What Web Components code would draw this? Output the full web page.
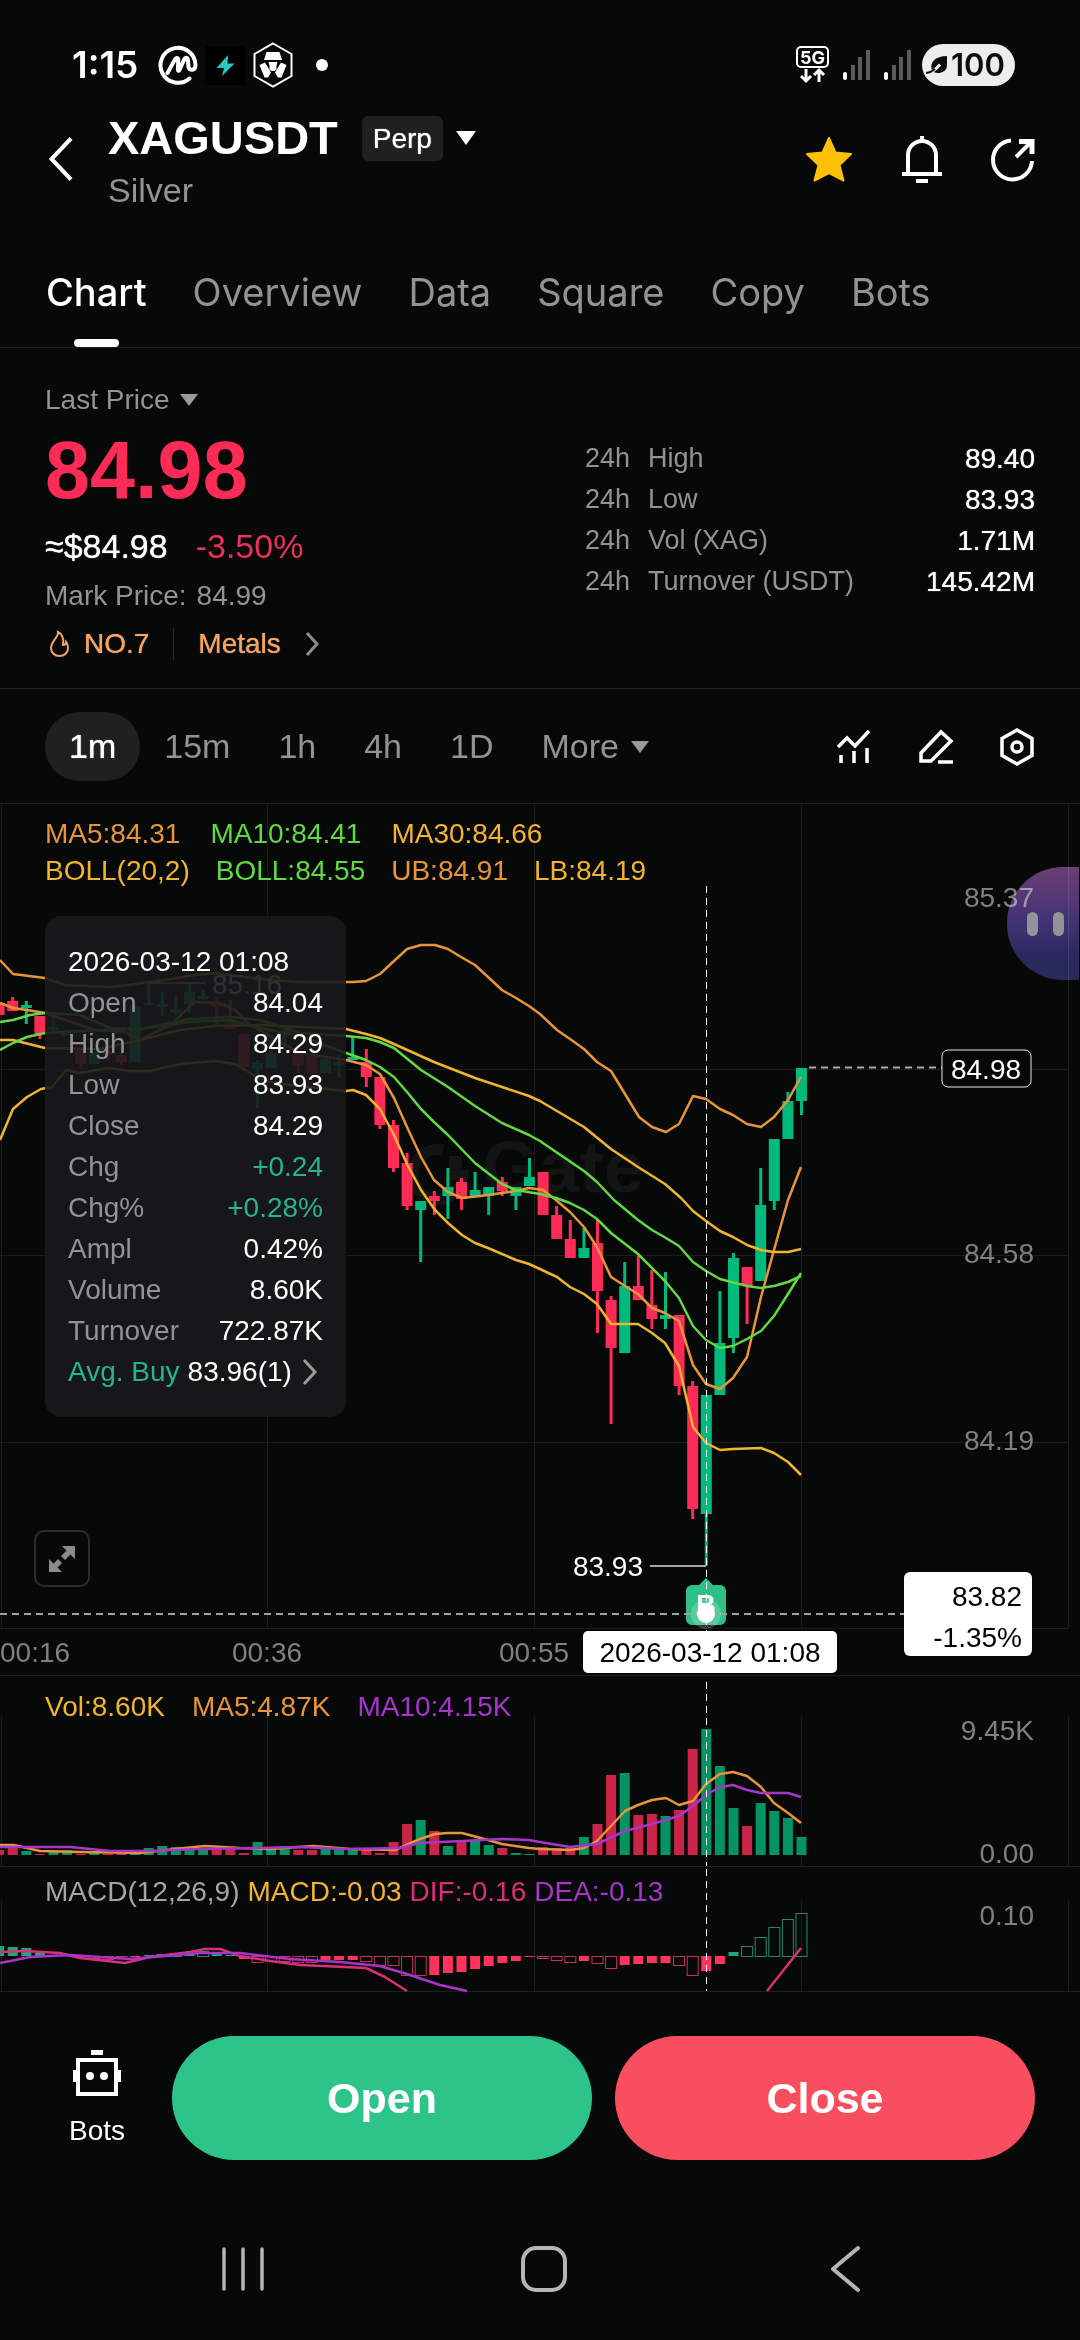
<!DOCTYPE html>
<html lang="en">
<head>
<meta charset="utf-8">
<meta name="viewport" content="width=device-width, initial-scale=1">
<title>XAGUSDT Perp</title>
<style>
  :root {
    --bg: #070909;
    --line: #1e2020;
    --muted: #929394;
    --up: #00b97c;
    --down: #ff2b57;
    --orange: #e8953a;
    --yellow: #f2b32f;
    --green: #62d844;
    --purple: #a834cc;
    --pink: #d92e78;
    --gutter: 45px;
  }
  body {
    margin: 0;
    background: var(--bg);
    color: #fff;
    font-family: "Liberation Sans", Arial, sans-serif;
    font-size: 28px;
    line-height: 32px;
  }
</style>
</head>
<body>
<app-screen></app-screen>

<script>
const reset = `
  * { box-sizing: border-box; }
  :host { display: block; }
  button, a { font: inherit; color: inherit; background: none; border: 0; padding: 0; margin: 0; text-decoration: none; cursor: pointer; }
  svg { display: block; flex: none; }
`;

function define(name, css, html) {
  const template = document.createElement('template');
  template.innerHTML = `<style>${reset}${css}</style>${html}`;
  customElements.define(name, class extends HTMLElement {
    constructor() {
      super();
      this.attachShadow({ mode: 'open' }).appendChild(template.content.cloneNode(true));
    }
  });
}

/* ---------- status bar ---------- */
define('status-bar', `
  :host { display: flex; justify-content: space-between; align-items: center; height: 110px; padding: 20px 65px 0 72px; font-family: Inter, sans-serif; }
  .side { display: flex; align-items: center; }
  .time { font-size: 37px; line-height: 44px; font-weight: 600; margin-right: 20px; }
  .left svg + svg { margin-left: 8px; }
  .signal { margin-left: 14px; }
  .battery { display: flex; align-items: center; gap: 3px; height: 42px; padding: 0 10px 0 4px; margin-left: 11px; border-radius: 21px; background: #eceeed; color: #0b0d0d; font-size: 31px; font-weight: 600; }
`, `
  <div class="side left">
    <span class="time">1:15</span>
    <svg width="40" height="40" viewBox="0 0 40 40" fill="none" stroke="#fff" stroke-width="4" stroke-linecap="round" stroke-linejoin="round">
      <path d="M31.500 33.500A17.500 17.500 0 1 1 37.500 20c0 5.500-6 6.500-7 2l-.6-7c-.3-3-2.600-3-3.600-.8L21.500 25c-.5 1.200-1.600 1-1.600-.4l.4-9.600c0-2.500-2.300-2.700-3.300-.6L9.500 28"/>
    </svg>
    <svg width="39" height="39" viewBox="0 0 39 39">
      <rect width="39" height="39" fill="#000"/>
      <path d="M22 9 10.500 22H18l-2 8L28.500 17.500H21.500L22 9z" fill="#26c9c3"/>
    </svg>
    <svg width="40" height="46" viewBox="0 0 40 46">
      <path d="M20 1.500 38.500 12v22L20 44.500 1.500 34V12z" fill="none" stroke="#fff" stroke-width="2"/>
      <path d="M13.500 10h13l2.500 8H11z" fill="#fff"/>
      <path d="M6.500 23 12 20.500l6 10-3 5h-3.500zM33.500 23 28 20.500l-6 10 3 5h3.500z" fill="#fff"/>
      <path d="M15.500 20h9l-1 3.500v4l-2 1.500h-3l-2-1.500v-4z" fill="#fff"/>
    </svg>
    <svg width="36" height="14" viewBox="0 0 36 14"><circle cx="21" cy="7" r="6" fill="#fff"/></svg>
  </div>
  <div class="side">
    <svg width="33" height="38" viewBox="0 0 33 38">
      <rect x="1" y="1" width="31" height="20" rx="4" fill="none" stroke="#fff" stroke-width="2"/>
      <text x="16.500" y="18" text-anchor="middle" font-family="Inter, sans-serif" font-weight="700" font-size="18" fill="#fff">5G</text>
      <path d="M10 23v12M5 30l5 5 5-5M23 36V24M18 29l5-5 5 5" fill="none" stroke="#fff" stroke-width="3"/>
    </svg>
    <svg class="signal" width="27" height="30" viewBox="0 0 27 30"><rect y="22" width="4" height="8" rx="2" fill="#fff"/><path d="M8 15h4v15H8zM15 7h4v23h-4zM23 0h4v30h-4z" fill="#5a5b5b"/></svg>
    <svg class="signal" width="27" height="30" viewBox="0 0 27 30"><rect y="22" width="4" height="8" rx="2" fill="#fff"/><path d="M8 15h4v15H8zM15 7h4v23h-4zM23 0h4v30h-4z" fill="#5a5b5b"/></svg>
    <div class="battery">
      <svg width="22" height="20" viewBox="0 0 22 20"><path d="M21 1v9c0 6-5 8-9 8-3 0-5-1-6-3-3-7 3-14 15-14z" fill="#0b0d0d"/><path d="M0 18.500c5-.5 9-3 14-9" stroke="#eceeed" stroke-width="3" fill="none"/><path d="M0 18c3-.2 6-1.500 9-4" stroke="#0b0d0d" stroke-width="2" fill="none"/></svg>
      <span>100</span>
    </div>
  </div>
`);

/* ---------- pair header ---------- */
define('pair-header', `
  :host { display: flex; align-items: center; padding: 0 var(--gutter) 22px; }
  .back { padding: 0 35px 0 4px; }
  .name { flex: 1; display: flex; flex-direction: column; gap: 6px; }
  .row { display: flex; align-items: center; }
  h1 { margin: 0; font-size: 47px; line-height: 56px; font-weight: 700; }
  .kind { display: flex; align-items: center; gap: 13px; margin-left: 24px; }
  .kind span { padding: 0 11px; line-height: 45px; border-radius: 6px; background: #1f2121; text-shadow: 0 0 1px; }
  .sub { font-size: 34px; line-height: 36px; color: var(--muted); }
  .actions { display: flex; align-items: center; gap: 48px; }
`, `
  <button class="back" aria-label="Back"><svg width="24" height="44" viewBox="0 0 24 44" fill="none" stroke="#fff" stroke-width="4"><path d="M22 1.500 2.500 22 22 42.500"/></svg></button>
  <div class="name">
    <div class="row">
      <h1>XAGUSDT</h1>
      <button class="kind"><span>Perp</span><svg width="20" height="14" viewBox="0 0 20 14"><path d="M0 0h20L10 14z" fill="#fff"/></svg></button>
    </div>
    <div class="sub">Silver</div>
  </div>
  <div class="actions">
    <button aria-label="Favourite"><svg width="48" height="46" viewBox="0 0 48 46"><path d="M24 2l6.500 14.500L46 18 34.500 29l4 15.500L24 37 9.500 44.500l4-15.500L2 18l15.500-1.500z" fill="#ffc107" stroke="#ffc107" stroke-width="2" stroke-linejoin="round"/></svg></button>
    <button aria-label="Alerts"><svg width="42" height="48" viewBox="0 0 42 48" fill="none" stroke="#fff" stroke-width="4"><path d="M21 1v5M1 39h40M7 39V20a14 14 0 0 1 28 0v19M15 46h12"/></svg></button>
    <button aria-label="Share"><svg width="44" height="46" viewBox="0 0 44 46" fill="none" stroke="#fff" stroke-width="4"><path d="M20 4.500A19.500 19.500 0 1 0 41 25M25 21 39 7"/><path d="M28 5.500h13V18" stroke-width="5"/></svg></button>
  </div>
`);

/* ---------- tabs ---------- */
define('tab-bar', `
  :host { border-bottom: 1px solid var(--line); }
  nav { display: flex; gap: 46px; padding: 42px 46px 0; }
  a { display: flex; flex-direction: column; align-items: center; gap: 27px; font-family: Inter, sans-serif; font-size: 38px; line-height: 40px; color: var(--muted); }
  a::after { content: ""; width: 45px; height: 8px; border-radius: 4px; }
  a[aria-current] { color: #fff; font-weight: 500; }
  a[aria-current]::after { background: #fff; }
`, `
  <nav>
    <a href="#chart" aria-current="page">Chart</a>
    <a href="#overview">Overview</a>
    <a href="#data">Data</a>
    <a href="#square">Square</a>
    <a href="#copy">Copy</a>
    <a href="#bots">Bots</a>
  </nav>
`);

/* ---------- price summary ---------- */
define('price-summary', `
  :host { display: flex; justify-content: space-between; padding: 36px var(--gutter) 28px; border-bottom: 1px solid var(--line); color: var(--muted); }
  .left { display: flex; flex-direction: column; align-items: flex-start; gap: 12px; }
  .kind { display: flex; align-items: center; gap: 10px; }
  .last { font-size: 81px; line-height: 84px; font-weight: 700; color: var(--down); }
  .fiat { display: flex; gap: 28px; font-size: 34px; line-height: 44px; color: #fff; }
  .fiat b { font-weight: 400; color: #ea3159; }
  .fiat span, dd, .tags { text-shadow: 0 0 1px; }
  .mark { display: flex; gap: 10px; }
  .tags { display: flex; align-items: center; margin-top: 4px; color: #f5a463; }
  .rank { display: flex; align-items: center; gap: 14px; padding: 0 24px 0 4px; border-right: 1px solid #2a2c2c; }
  .sector { display: flex; align-items: center; gap: 24px; padding-left: 24px; }
  dl { flex: none; width: 450px; margin: 54px 0 0; }
  dl div { display: flex; line-height: 41px; }
  dt { display: flex; flex: 1; gap: 18px; font-size: 27px; }
  dd { margin: 0; color: #fff; }
`, `
  <div class="left">
    <button class="kind">Last Price<svg width="18" height="12" viewBox="0 0 18 12"><path d="M0 0h18L9 12z" fill="#9a9b9b"/></svg></button>
    <div class="last">84.98</div>
    <div class="fiat"><span>≈$84.98</span><b>-3.50%</b></div>
    <div class="mark"><span>Mark Price:</span><span>84.99</span></div>
    <div class="tags">
      <span class="rank"><svg width="21" height="28" viewBox="0 0 21 28" fill="none" stroke="#f5a463" stroke-width="2"><path d="M9 2c1 5-7 9-7 16 0 5 4 8 8.500 8s8.500-3 8.500-8c0-3-1-5-2-6 0 2-1 3-3 3C15 9 13 4 9 2z"/></svg>NO.7</span>
      <a class="sector" href="#metals">Metals<svg width="14" height="24" viewBox="0 0 14 24" fill="none" stroke="#8b8c8c" stroke-width="3"><path d="M2 1l10 11L2 23"/></svg></a>
    </div>
  </div>
  <dl>
    <div><dt><span>24h</span><span>High</span></dt><dd>89.40</dd></div>
    <div><dt><span>24h</span><span>Low</span></dt><dd>83.93</dd></div>
    <div><dt><span>24h</span><span>Vol (XAG)</span></dt><dd>1.71M</dd></div>
    <div><dt><span>24h</span><span>Turnover (USDT)</span></dt><dd>145.42M</dd></div>
  </dl>
`);

/* ---------- interval bar ---------- */
define('interval-bar', `
  :host { display: flex; justify-content: space-between; align-items: center; padding: 23px var(--gutter) 22px; font-size: 34px; color: var(--muted); }
  .set { display: flex; align-items: center; }
  .set button { line-height: 69px; padding: 0 24px; }
  .set button[aria-pressed="true"] { background: #1f2121; color: #fff; border-radius: 35px; text-shadow: 0 0 1px; }
  .set .more { display: flex; align-items: center; gap: 12px; }
  .tools { display: flex; align-items: center; gap: 45px; }
`, `
  <div class="set">
    <button aria-pressed="true">1m</button>
    <button>15m</button>
    <button>1h</button>
    <button>4h</button>
    <button>1D</button>
    <button class="more">More<svg width="18" height="12" viewBox="0 0 18 12"><path d="M0 0h18L9 12z" fill="#9a9b9b"/></svg></button>
  </div>
  <div class="tools">
    <button aria-label="Indicators"><svg width="36" height="36" viewBox="0 0 36 36" fill="none" stroke="#fff" stroke-width="3.500"><path d="M2 18 11 9l8 8L33 2M5 26v8M18 22v12M31 19v15"/></svg></button>
    <button aria-label="Draw"><svg width="37" height="36" viewBox="0 0 37 36" fill="none" stroke="#fff" stroke-width="3.500"><path d="M4 32V24L24 3 34 12 14 32zM21 33h15"/></svg></button>
    <button aria-label="Settings"><svg width="36" height="40" viewBox="0 0 36 40" fill="none" stroke="#fff" stroke-width="3.500"><path d="M18 3 33 11.500v17L18 37 3 28.500v-17z"/><circle cx="18" cy="20" r="5"/></svg></button>
  </div>
`);

/* ---------- chart drawing helpers ---------- */
const STEP = 13.6, LAST_X = 801.5;
const UP = '#00b97c', DOWN = '#ff2b57';
const GRID_X = [1, 267, 534, 801, 1068];
const xOf = k => LAST_X - k * STEP;

const line = (pts, color, width = 2.5) => `<polyline points="${pts}" fill="none" stroke="${color}" stroke-width="${width}" stroke-linejoin="round"/>`;
const grid = (top, bottom, rows = []) => `<g fill="#1b1d1d">${GRID_X.map(x => `<rect x="${x}" y="${top}" width="1" height="${bottom - top}"/>`).join('')}${rows.map(y => `<rect x="0" y="${y}" width="1068" height="1"/>`).join('')}</g>`;
const label = (x, y, text, fill = '#7e8081', anchor = 'end') => `<text x="${x}" y="${y + 10}" fill="${fill}" text-anchor="${anchor}">${text}</text>`;

/* candle: [direction, high, body top, body bottom, low], newest first */
const CANDLES = [
  [1,1068,1068,1101,1115],[1,1092,1101,1139,1139],[1,1139,1139,1201,1210],[1,1168,1205,1281,1281],[0,1267,1267,1286,1324],
  [1,1253,1258,1338,1353],[1,1291,1343,1395,1395],[1,1395,1395,1514,1566],[0,1381,1386,1509,1519],[0,1315,1315,1386,1395],
  [1,1272,1315,1319,1329],[0,1270,1305,1319,1329],[0,1256,1286,1300,1300],[1,1262,1286,1353,1353],[0,1296,1300,1348,1424],
  [0,1220,1243,1291,1333],[1,1228,1248,1258,1258],[0,1220,1239,1258,1258],[0,1206,1215,1239,1239],[0,1172,1172,1215,1215],
  [1,1158,1177,1186,1186],[1,1187,1187,1196,1210],[0,1177,1182,1191,1196],[1,1187,1187,1196,1215],[1,1172,1190,1196,1196],
  [0,1178,1182,1199,1210],[1,1168,1187,1196,1219],[0,1191,1196,1201,1215],[1,1201,1201,1210,1262],[0,1153,1163,1206,1210],
  [0,1120,1125,1168,1172],[0,1077,1077,1125,1129],[0,1049,1062,1077,1087],[1,1036,1057,1060,1060],[1,1055,1062,1065,1078],
  [1,1059,1059,1073,1073],[0,1056,1056,1073,1078],[0,1053,1053,1065,1073],[1,1030,1030,1034,1050],[1,1040,1053,1068,1068],
  [1,1060,1063,1069,1108],[0,1034,1034,1067,1067],[0,1000,1020,1029,1029],[0,997,1004,1007,1025],[1,990,996,999,1000],
  [1,984,992,1004,1013],[1,996,1009,1013,1015],[1,992,1004,1007,1016],[1,984,1003,1005,1005],[1,1006,1006,1062,1062],
  [0,1052,1055,1062,1065],[0,1045,1052,1055,1060],[1,1052,1052,1064,1064],[0,1048,1048,1064,1067],[1,1030,1033,1036,1036],
  [1,1016,1027,1030,1033],[0,1016,1016,1034,1039],[1,1001,1005,1008,1024],[0,997,1001,1011,1011],[0,1003,1003,1015,1015]
];
const candles = CANDLES.map(([up, hi, top, bot, lo], k) => {
  const x = xOf(k), c = up ? UP : DOWN;
  return `<path d="M${x - 5.5} ${top}h11V${bot}h-11zM${x - 1.5} ${hi}h3V${lo}h-3z" fill="${c}"/>`;
}).join('');

const PRICE_LINES = [
  ['#e8953a', '0,960 13,974 45,978 65,985 110,987 135,984 165,980 195,975 215,973 270,980 300,982 353,982 366,981 380,974 394,961 407,949 421,945 435,945 448,949 461,957 475,965 488,977 502,990 516,998 529,1006 540,1014 557,1030 570,1039 584,1049 597,1062 611,1071 625,1094 639,1117 652,1127 666,1132 679,1124 693,1096 706,1099 720,1109 733,1115 747,1124 761,1127 774,1117 788,1100 801,1077'],
  ['#e8953a', '0,1003 13,1008 27,1010 45,1013 65,1020 95,1030 125,1032 140,1040 170,1025 195,1002 220,1003 235,1010 250,1025 300,1053 346,1060 366,1065 380,1074 394,1098 407,1127 421,1157 434,1180 448,1192 462,1198 480,1196 502,1193 516,1191 529,1188 543,1190 556,1200 570,1212 584,1227 597,1247 611,1277 625,1286 638,1294 652,1308 665,1313 679,1321 693,1365 706,1384 720,1389 733,1378 747,1357 761,1297 774,1250 788,1200 801,1167'],
  ['#f2b32f', '0,1040 13,1040 45,1048 100,1049 140,1040 180,1030 215,1026 260,1025 346,1029 366,1034 380,1038 394,1044 434,1062 475,1078 502,1087 529,1096 540,1101 584,1127 611,1149 638,1167 665,1184 681,1198 693,1211 706,1221 720,1231 733,1237 747,1245 761,1250 774,1252 788,1252 801,1249'],
  ['#62d844', '0,1050 13,1043 27,1037 45,1033 100,1030 140,1029 190,1019 230,1017 260,1020 300,1033 346,1036 366,1038 380,1042 394,1048 421,1070 448,1087 475,1106 502,1123 529,1135 540,1141 584,1171 597,1182 614,1200 638,1220 652,1230 666,1238 679,1246 693,1262 706,1271 720,1279 747,1286 761,1288 774,1286 788,1282 801,1276'],
  ['#62d844', '0,1022 13,1020 30,1015 45,1013 80,1015 110,1028 140,1029 190,1022 230,1020 260,1028 300,1036 346,1053 366,1060 380,1067 394,1077 407,1092 421,1109 434,1122 448,1135 475,1163 502,1184 516,1190 540,1194 556,1198 570,1203 584,1210 597,1219 611,1233 638,1254 665,1281 679,1298 693,1326 706,1340 720,1348 733,1346 747,1339 761,1331 774,1316 788,1294 801,1273'],
  ['#f2b32f', '0,1140 13,1109 27,1097 41,1089 52,1087 66,1070 80,1073 108,1068 130,1071 150,1071 180,1064 215,1061 235,1064 262,1080 290,1085 346,1091 353,1090 366,1095 380,1109 394,1135 407,1164 421,1190 435,1210 448,1223 462,1235 475,1243 488,1248 516,1260 529,1264 540,1269 557,1277 570,1287 584,1294 597,1304 611,1324 638,1324 652,1333 665,1343 679,1366 693,1427 706,1443 720,1450 733,1449 761,1448 774,1453 788,1462 801,1475']
];

const chartCss = `
  :host { display: grid; position: relative; border-top: 1px solid var(--line); }
  .plot, .legend { grid-area: 1 / 1; }
  .plot { width: 100%; height: auto; overflow: visible; font-family: "Liberation Sans", Arial, sans-serif; font-size: 28px; }
  .legend { display: flex; align-self: start; padding: 0 var(--gutter); }
  .o { color: var(--orange); } .y { color: var(--yellow); } .g { color: var(--green); } .p { color: var(--purple); } .k { color: var(--pink); }
`;

/* ---------- OHLC tooltip ---------- */
define('ohlc-card', `
  :host { width: 301px; padding: 25px 23px; border-radius: 16px; background: rgba(26, 26, 28, .9); line-height: 41px; }
  dl { margin: 0; }
  dl div { display: flex; justify-content: space-between; }
  dt { color: var(--muted); }
  dd { margin: 0; }
  .up { color: #26b587; }
  a { display: flex; align-items: center; gap: 8px; white-space: nowrap; }
  a svg { margin-left: 2px; }
`, `
  <div>2026-03-12 01:08</div>
  <dl>
    <div><dt>Open</dt><dd>84.04</dd></div>
    <div><dt>High</dt><dd>84.29</dd></div>
    <div><dt>Low</dt><dd>83.93</dd></div>
    <div><dt>Close</dt><dd>84.29</dd></div>
    <div><dt>Chg</dt><dd class="up">+0.24</dd></div>
    <div><dt>Chg%</dt><dd class="up">+0.28%</dd></div>
    <div><dt>Ampl</dt><dd>0.42%</dd></div>
    <div><dt>Volume</dt><dd>8.60K</dd></div>
    <div><dt>Turnover</dt><dd>722.87K</dd></div>
  </dl>
  <a href="#orders"><span class="up">Avg. Buy</span><span>83.96(1)</span><svg width="16" height="28" viewBox="0 0 16 28" fill="none" stroke="#9a9b9b" stroke-width="3"><path d="M2 2l11 12L2 26"/></svg></a>
`);

/* ---------- price chart ---------- */
define('price-chart', chartCss + `
  .legend { flex-direction: column; padding-top: 11px; line-height: 37px; }
  .legend div { display: flex; gap: 30px; }
  .legend div + div { gap: 26px; }
  ohlc-card { position: absolute; left: var(--gutter); top: 112px; }
  .full { position: absolute; left: 34px; top: 726px; width: 56px; height: 57px; display: grid; place-items: center; border: 2px solid #2b2d2d; border-radius: 10px; }
  .helper { position: absolute; right: 1px; top: 63px; width: 72px; height: 113px; display: flex; align-items: center; gap: 15px; padding-left: 20px; border-radius: 56px 0 0 56px; background: linear-gradient(#703b78, #45317a 45%, #24235e 80%); opacity: .92; mix-blend-mode: screen; }
  .helper i { width: 11px; height: 24px; border-radius: 6px; background: #9d9aa2; }
`, `
  <svg class="plot" viewBox="0 804 1080 871">
    ${grid(804, 1628, [1069, 1255, 1442, 1628])}
    <g opacity=".9">
      <path d="M443 1150a25 25 0 1 0 20 25h-12" fill="none" stroke="#151717" stroke-width="11"/>
      <rect x="449" y="1156" width="13" height="13" fill="#151717"/>
      <text x="482" y="1192" font-size="73" font-weight="700" fill="#151717">Gate</text>
    </g>
    ${candles}
    ${PRICE_LINES.map(([c, p]) => line(p, c)).join('')}
    <path d="M147 983h58" stroke="#aaa" stroke-width="2"/>
    ${label(212, 984, '85.16', '#fff', 'start')}
    ${label(1034, 897, '85.37')}${label(1034, 1253, '84.58')}${label(1034, 1440, '84.19')}
    <path d="M809 1067.500H942" stroke="#aaabab" stroke-width="2" stroke-dasharray="7 5"/>
    <rect x="942" y="1050" width="89" height="37" rx="6" fill="#070909" stroke="#e8e8e8" stroke-width="1"/>
    ${label(986, 1069, '84.98', '#fff', 'middle')}
    ${label(643, 1566, '83.93', '#fff')}
    <path d="M650 1566h56" stroke="#a6a7a7" stroke-width="2"/>
    <path d="M706 1578l7 7h7a6 6 0 0 1 6 6v28a6 6 0 0 1-6 6h-28a6 6 0 0 1-6-6v-28a6 6 0 0 1 6-6h7z" fill="#2fc088"/>
    <text x="706" y="1614" text-anchor="middle" fill="#fff" font-weight="700" font-size="27">B</text>
    <path d="M0 1614H904" stroke="#9fa0a0" stroke-width="2" stroke-dasharray="7 5"/>
    <path d="M706.500 886V1631" stroke="#fff" stroke-width="1" stroke-dasharray="7 5"/>
    <circle cx="706" cy="1614" r="15" fill="#fff" opacity=".2"/><circle cx="706" cy="1614" r="9" fill="#fff"/>
    ${label(0, 1652, '00:16', '#7e8081', 'start')}${label(267, 1652, '00:36', '#7e8081', 'middle')}${label(534, 1652, '00:55', '#7e8081', 'middle')}
    <rect x="583" y="1631" width="254" height="42" rx="5" fill="#fff"/>
    ${label(710, 1652, '2026-03-12 01:08', '#000', 'middle')}
    <rect x="904" y="1572" width="128" height="84" rx="6" fill="#fff"/>
    ${label(1022, 1596, '83.82', '#000')}${label(1022, 1637, '-1.35%', '#000')}
  </svg>
  <div class="legend">
    <div><span class="o">MA5:84.31</span><span class="g">MA10:84.41</span><span class="y">MA30:84.66</span></div>
    <div><span class="y">BOLL(20,2)</span><span class="g">BOLL:84.55</span><span class="o">UB:84.91</span><span class="y">LB:84.19</span></div>
  </div>
  <ohlc-card></ohlc-card>
  <button class="full" aria-label="Full screen"><svg width="28" height="28" viewBox="0 0 28 28" fill="#8b8c8c"><path d="M14 1h13v13l-4.500-4.500-5.500 5.500-4-4 5.500-5.500zM1 14l4.500 4.500L10 14l4 4-4.500 4.500L14 27H1z"/></svg></button>
  <button class="helper" aria-label="Assistant"><i></i><i></i></button>
`);

/* ---------- volume ---------- */
const VOLUME = [1837,1818,1811,1803,1826,1808,1766,1729,1749,1810,1816,1814,1815,1773,1775,1824,1837,1848,1848,1847,1854,1853,1848,1845,1840,1842,1846,1831,1820,1824,1842,1853,1850,1849,1849,1849,1850,1850,1846,1849,1842,1853,1849,1849,1848,1847,1847,1846,1848,1854,1854,1854,1851,1854,1850,1851,1854,1851,1848,1850];
define('volume-chart', chartCss + `
  .legend { gap: 27px; padding-top: 15px; }
`, `
  <svg class="plot" viewBox="0 1676 1080 190">
    ${grid(1716, 1866)}
    ${VOLUME.map((y, k) => `<rect x="${xOf(k) - 5}" y="${y}" width="10" height="${1855 - y}" fill="${CANDLES[k][0] ? '#039462' : '#cb2449'}"/>`).join('')}
    ${line('0,1845 14,1845 40,1851 80,1852 140,1853 175,1849 205,1846 240,1848 270,1849 313,1846 350,1849 395,1850 420,1839 435,1834 448,1833 462,1833 488,1840 502,1844 529,1848 540,1849 570,1850 584,1848 597,1841 625,1811 638,1805 652,1800 666,1798 679,1805 693,1801 706,1784 720,1774 733,1772 747,1776 761,1787 774,1803 788,1813 801,1823', '#e8953a')}
    ${line('0,1847 70,1847 110,1851 150,1851 200,1849 260,1848 300,1847 345,1849 400,1848 420,1843 462,1841 502,1839 529,1840 540,1842 570,1847 597,1844 625,1831 652,1824 679,1816 693,1806 706,1795 720,1787 733,1785 747,1790 761,1793 788,1793 801,1797', '#a834cc')}
    ${label(1034, 1730, '9.45K')}${label(1034, 1853, '0.00')}
    <path d="M706.500 1682V1866" stroke="#fff" stroke-width="1" stroke-dasharray="7 5"/>
  </svg>
  <div class="legend"><span class="y">Vol:8.60K</span><span class="o">MA5:4.87K</span><span class="p">MA10:4.15K</span></div>
`);

/* ---------- MACD: [end of bar, filled] ---------- */
const MACD = [[1913,0],[1919,0],[1927,0],[1937,0],[1946,0],[1952,1],[1964,1],[1971,1],[1975,0],[1965,0],[1963,1],[1963,1],[1964,1],[1965,1],[1968,0],[1963,0],[1961,1],[1962,0],[1960,0],[1958,0],[1957,1],[1961,1],[1963,1],[1966,1],[1969,1],[1972,1],[1973,1],[1975,1],[1975,0],[1975,0],[1965,0],[1965,0],[1961,0],[1960,1],[1960,1],[1960,1],[1962,0],[1962,0],[1961,0],[1961,0],[1962,0],[1959,1],[1955,1],[1954,1],[1951,0],[1953,1],[1953,0],[1954,0],[1955,1],[1957,1],[1958,0],[1959,0],[1958,0],[1957,1],[1955,1],[1955,1],[1953,1],[1948,1],[1947,1],[1946,1]];
define('macd-chart', chartCss + `
  :host { border-bottom: 1px solid var(--line); }
  .legend { gap: 8px; padding-top: 9px; }
  .t { color: #a4a5a5; }
`, `
  <svg class="plot" viewBox="0 1867 1080 124">
    ${grid(1900, 1991)}
    ${MACD.map(([y, filled], k) => {
      const c = y < 1956 ? (filled ? '#1aa87b' : '#228a68') : (filled ? '#ff335c' : '#c43352');
      const top = Math.min(y, 1956), h = Math.max(Math.abs(y - 1956), 1);
      return filled ? `<rect x="${xOf(k) - 5}" y="${top}" width="10" height="${h}" fill="${c}"/>`
        : `<rect x="${xOf(k) - 5.500}" y="${top + .5}" width="11" height="${h}" fill="none" stroke="${c}"/>`;
    }).join('')}
    ${line('0,1952 25,1951 60,1953 80,1958 125,1963 150,1957 190,1952 205,1949 220,1949 240,1956 270,1961 300,1965 345,1967 366,1968 385,1977 407,1991', '#d92e78')}
    ${line('767,1991 801,1948', '#d92e78')}
    ${line('0,1963 30,1957 70,1955 130,1959 200,1953 240,1953 290,1959 340,1962 380,1966 410,1975 440,1985 467,1991', '#a834cc')}
    ${label(1034, 1915, '0.10')}
    <path d="M706.500 1869V1991" stroke="#fff" stroke-width="1" stroke-dasharray="7 5"/>
  </svg>
  <div class="legend"><span class="t">MACD(12,26,9)</span><span class="y">MACD:-0.03</span><span class="k">DIF:-0.16</span><span class="p">DEA:-0.13</span></div>
`);

/* ---------- trade bar ---------- */
define('trade-bar', `
  :host { display: flex; align-items: center; gap: 23px; padding: 44px var(--gutter) 0; }
  .bots { width: 104px; display: flex; flex-direction: column; align-items: center; gap: 18px; }
  .cta { flex: 1; height: 124px; border-radius: 62px; font-size: 43px; font-weight: 700; color: #fff; }
  .open { background: #2dc489; }
  .close { background: #f94e60; }
`, `
  <button class="bots">
    <svg width="48" height="48" viewBox="0 0 48 48" fill="none" stroke="#fff" stroke-width="4"><rect x="5" y="11" width="38" height="34"/><path d="M18 3.500h12" stroke-width="5"/><path d="M2 21v12M46 21v12"/><circle cx="17" cy="27" r="4" fill="#fff" stroke="none"/><circle cx="31" cy="27" r="4" fill="#fff" stroke="none"/></svg>
    Bots
  </button>
  <button class="cta open">Open</button>
  <button class="cta close">Close</button>
`);

/* ---------- system navigation ---------- */
define('nav-bar', `
  :host { display: flex; justify-content: space-around; align-items: center; padding: 85px 84px 40px 92px; }
`, `
  <button aria-label="Recents"><svg width="48" height="48" viewBox="0 0 48 48" stroke="#b5b5b5" stroke-width="3.500" stroke-linecap="round"><path d="M5 4v40M24 4v40M43 4v40"/></svg></button>
  <button aria-label="Home"><svg width="48" height="48" viewBox="0 0 48 48" fill="none" stroke="#b5b5b5" stroke-width="4"><rect x="3" y="3" width="42" height="42" rx="13"/></svg></button>
  <button aria-label="Back"><svg width="48" height="48" viewBox="0 0 48 48" fill="none" stroke="#b5b5b5" stroke-width="4" stroke-linecap="round" stroke-linejoin="round"><path d="M37 3 12 24 37 45"/></svg></button>
`);

define('app-screen', `:host { display: flex; flex-direction: column; }`, `
  <status-bar></status-bar>
  <pair-header></pair-header>
  <tab-bar></tab-bar>
  <price-summary></price-summary>
  <interval-bar></interval-bar>
  <price-chart></price-chart>
  <volume-chart></volume-chart>
  <macd-chart></macd-chart>
  <trade-bar></trade-bar>
  <nav-bar></nav-bar>
`);
</script>
</body>
</html>
